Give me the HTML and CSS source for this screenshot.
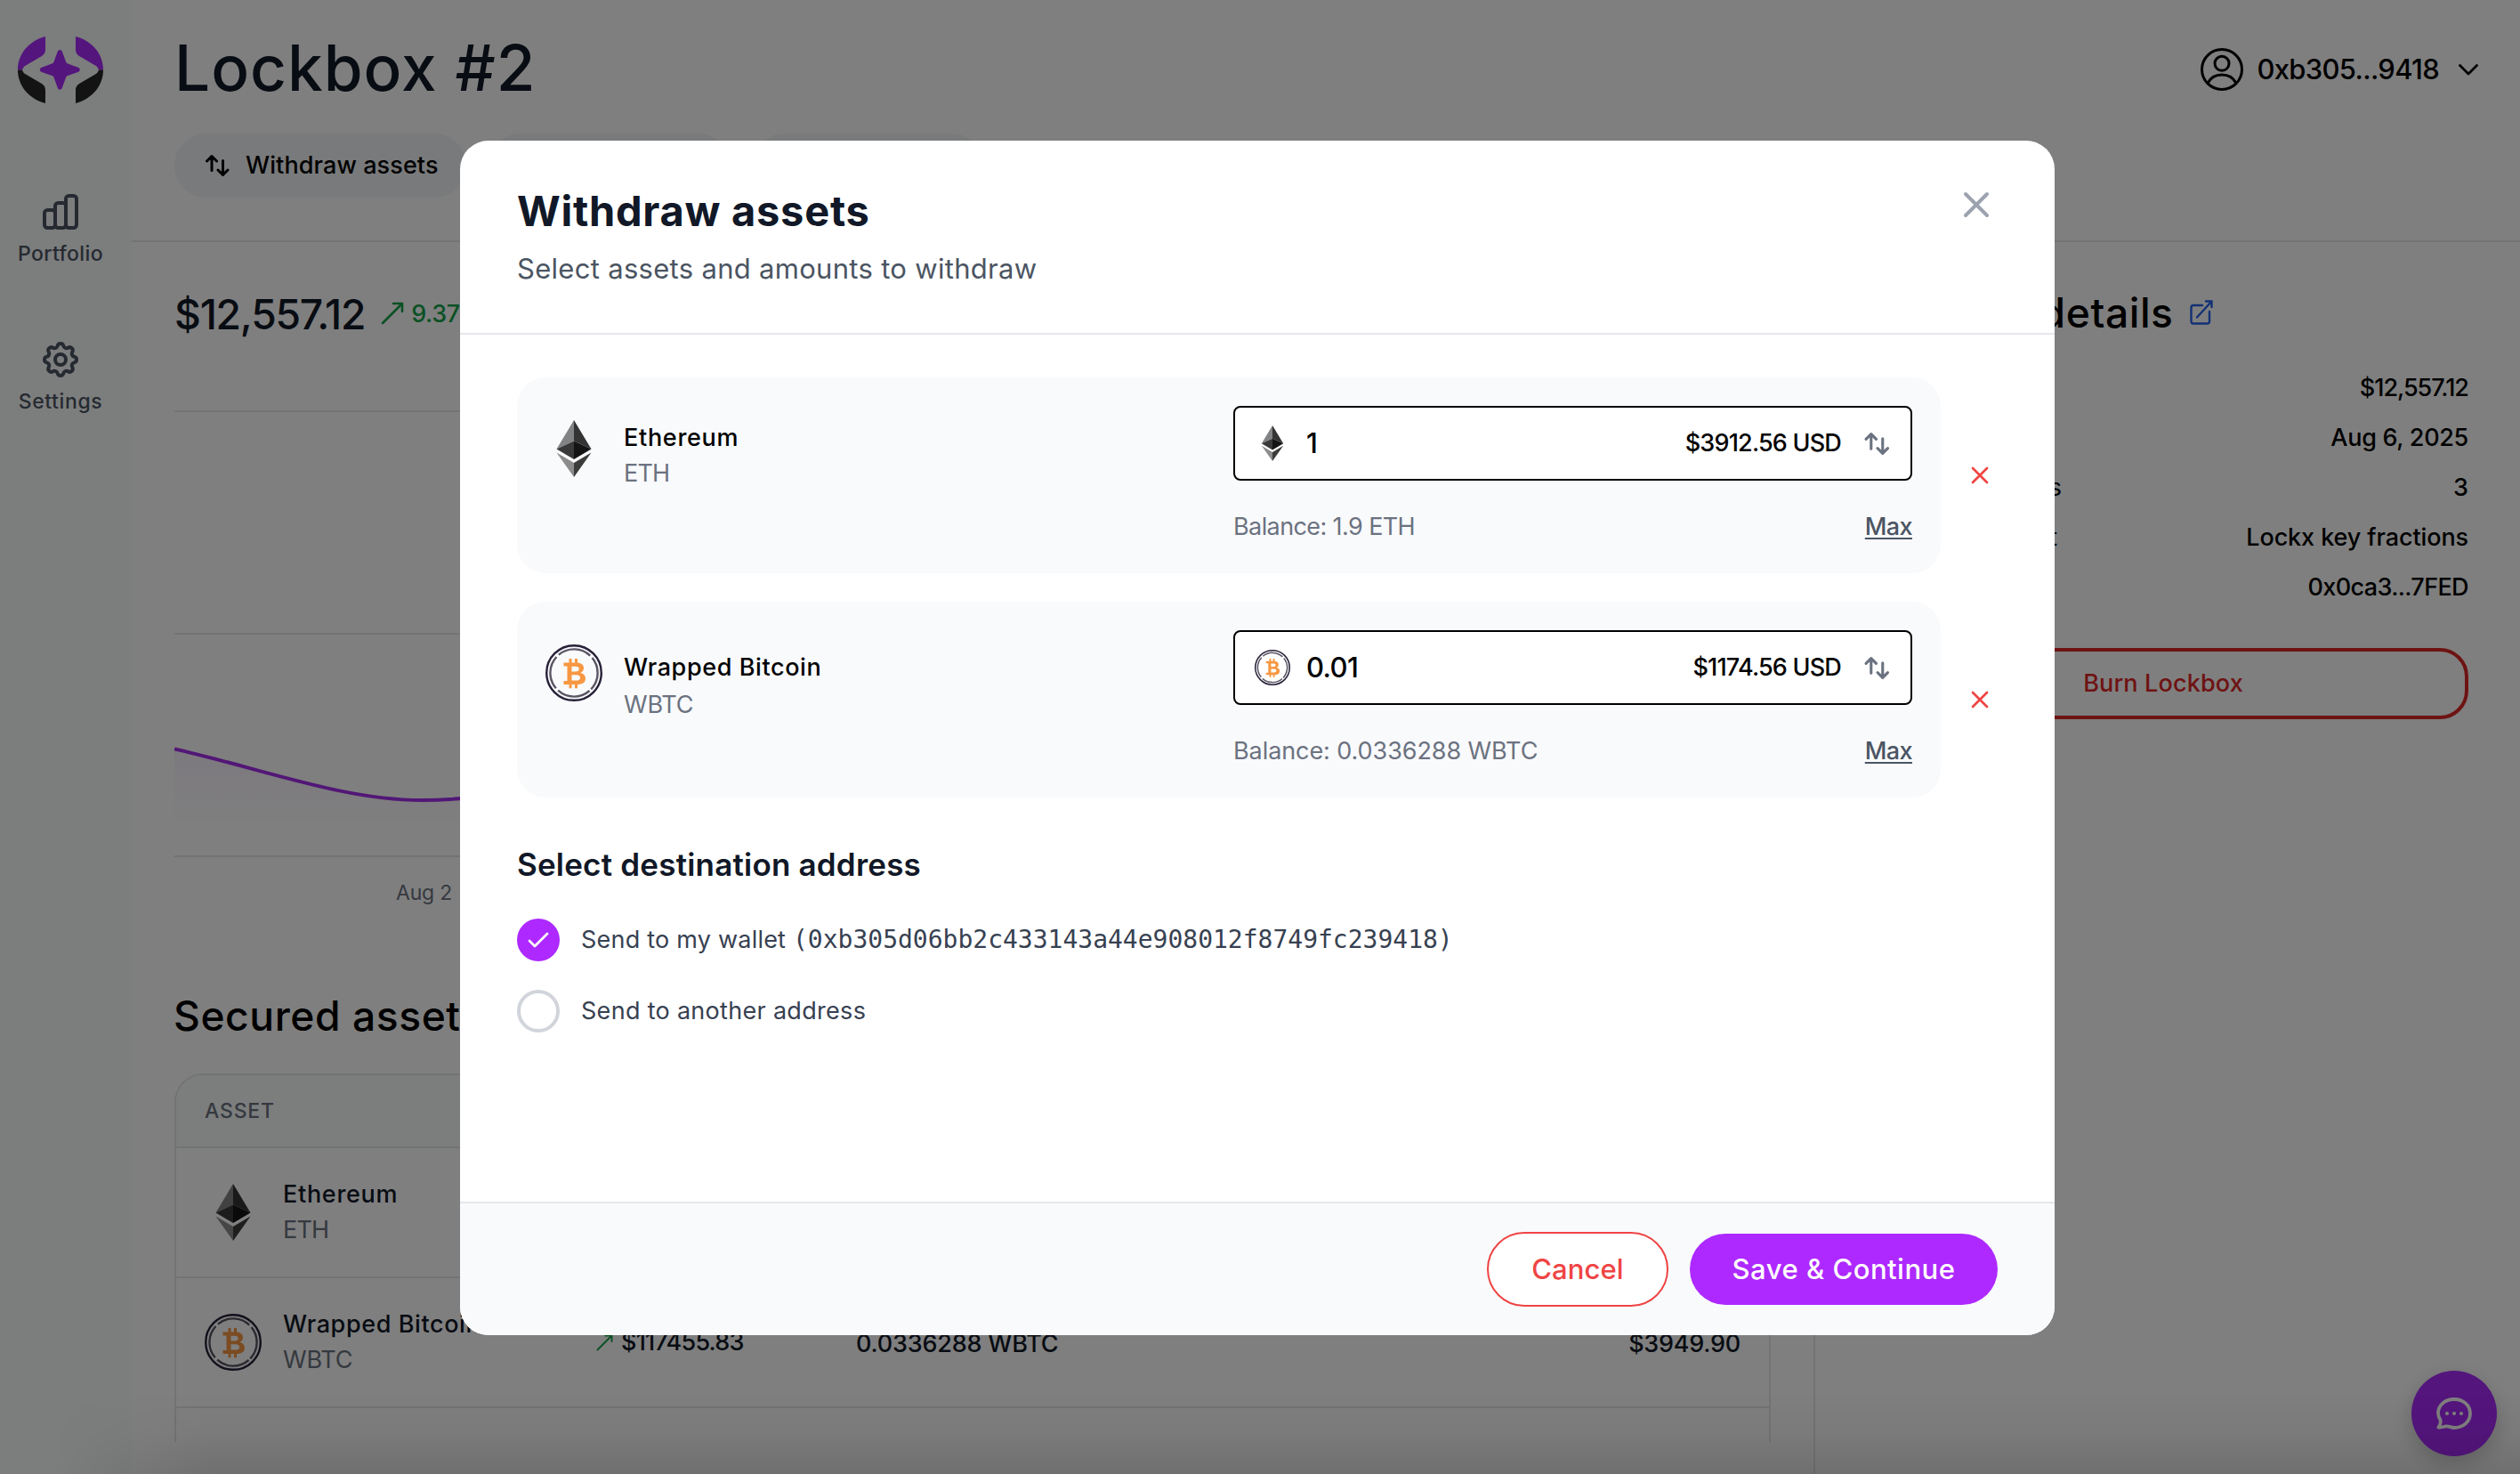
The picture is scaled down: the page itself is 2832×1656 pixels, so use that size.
FILE: index.html
```html
<!DOCTYPE html>
<html lang="en">
<head>
<meta charset="utf-8">
<title>Lockbox #2</title>
<link rel="stylesheet" href="styles.css">
</head>
<body>
<svg class="defs" width="0" height="0" aria-hidden="true">
  <symbol id="eth" viewBox="0 0 64 64">
    <path fill="#828384" d="M32 0 12.5 32.5 32 23.5z"/>
    <path fill="#343434" d="M32 0 51.5 32.5 32 23.5z"/>
    <path fill="#393939" d="M12.5 32.5 32 23.5V44z"/>
    <path fill="#141414" d="M51.5 32.5 32 23.5V44z"/>
    <path fill="#8c8c8c" d="M12.5 36.5 32 48v16z"/>
    <path fill="#3c3c3b" d="M51.5 36.5 32 48v16z"/>
  </symbol>
  <symbol id="wbtc" viewBox="0 0 64 64">
    <circle cx="32" cy="32" r="30.8" fill="none" stroke="#282138" stroke-width="2.4"/>
    <circle cx="32" cy="32" r="26.6" fill="none" stroke="#5a5564" stroke-width="2.4" stroke-dasharray="38.3 3.48" transform="rotate(48.8 32 32)"/>
    <path fill="#f79742" fill-rule="evenodd" d="M20.5 20.5H35c5 0 8 2.4 8 6.1 0 2.6-1.400 4.500-3.700 5.300 3.600.8 5.700 3 5.700 6.300 0 4.500-3.500 6.800-9.500 6.800h-15v-4h4v-16.500h-4zM29.500 24.800v5.600h4.300c2.600 0 3.900-1 3.900-2.900s-1.300-2.700-3.900-2.700zM29.500 34.200v6.400h5c3 0 4.500-1.100 4.500-3.200s-1.500-3.200-4.500-3.200z"/>
    <path fill="#f79742" d="M26.500 16h3v5h-3zM33 16h3v5h-3zM26.500 44.500h3v4.700h-3zM33 44.500h3v4.700h-3z"/>
  </symbol>
  <symbol id="swap" viewBox="0 0 28 26">
    <path fill="none" stroke="currentColor" stroke-width="3" stroke-linecap="round" stroke-linejoin="round" d="M8 18.500V2.500M2.500 8 8 2.500l5.500 5.500M20.500 7.500v16M15 18l5.500 5.500L26 18"/>
  </symbol>
  <symbol id="cross" viewBox="0 0 48 48">
    <path fill="none" stroke="currentColor" stroke-width="4" stroke-linecap="round" d="m12 12 24 24M36 12 12 36"/>
  </symbol>
  <symbol id="trend" viewBox="0 0 26 26">
    <path fill="none" stroke="currentColor" stroke-width="2.600" stroke-linecap="round" stroke-linejoin="round" d="M2 24 24 2M14 2h10v9"/>
  </symbol>
</svg>

<div class="app">
  <nav class="sidebar">
    <svg class="logo" viewBox="0 0 96 75">
      <path fill="#a82afa" d="M31 0v14c0 4-1 6-4.500 8.200L9 32.500C6.500 34 6 35 5 37.500H0C0 20 12 5 31 0z"/>
      <path fill="#262626" d="M31 75V61c0-4-1-6-4.500-8.200L9 42.500C6.500 41 6 40 5 37.500H0C0 55 12 70 31 75z"/>
      <path fill="#a82afa" d="M65 0v14c0 4 1 6 4.500 8.200L87 32.500c2.500 1.500 3 2.500 4 5h5C96 20 84 5 65 0z"/>
      <path fill="#262626" d="M65 75V61c0-4 1-6 4.500-8.200L87 42.500c2.500-1.500 3-2.500 4-5h5C96 55 84 70 65 75z"/>
      <path fill="#a82afa" d="M44.700 17c.9-2.700 4.300-2.700 5.200 0l4.100 11.300c.4 1.200 1 1.800 2.200 2.200L67.600 34.700c2.900 1 2.900 4.200 0 5.200l-11.400 4.200c-1.200.4-1.800 1-2.200 2.200L49.900 57.600c-.9 2.700-4.300 2.700-5.200 0l-4.100-11.300c-.4-1.200-1-1.800-2.200-2.200L27 39.900c-2.900-1-2.900-4.200 0-5.200l11.400-4.200c1.200-.4 1.800-1 2.200-2.200z"/>
    </svg>
    <a class="nav-item">
      <svg viewBox="2 2 20 20" fill="none" stroke="currentColor" stroke-width="2"><rect x="3" y="11" width="6" height="10" rx="1.700"/><rect x="9" y="7" width="6" height="14" rx="1.700"/><rect x="15" y="3" width="6" height="18" rx="1.700"/></svg>
      <span class="t-portfolio">Portfolio</span>
    </a>
    <a class="nav-item">
      <svg viewBox="2 2 20 20" fill="none" stroke="currentColor" stroke-width="2" stroke-linejoin="round"><path d="M10.325 4.317c.426-1.756 2.924-1.756 3.350 0a1.724 1.724 0 0 0 2.573 1.066c1.543-.94 3.310.826 2.370 2.370a1.724 1.724 0 0 0 1.065 2.572c1.756.426 1.756 2.924 0 3.350a1.724 1.724 0 0 0-1.066 2.573c.94 1.543-.826 3.310-2.370 2.370a1.724 1.724 0 0 0-2.572 1.065c-.426 1.756-2.924 1.756-3.350 0a1.724 1.724 0 0 0-2.573-1.066c-1.543.94-3.310-.826-2.370-2.370a1.724 1.724 0 0 0-1.065-2.572c-1.756-.426-1.756-2.924 0-3.350a1.724 1.724 0 0 0 1.066-2.573c-.94-1.543.826-3.310 2.370-2.370.996.608 2.296.07 2.572-1.065z"/><circle cx="12" cy="12" r="3"/></svg>
      <span class="t-settings">Settings</span>
    </a>
  </nav>

  <div class="page">
    <header class="header">
      <div>
        <h1>Lockbox #2</h1>
        <div class="pills">
          <button class="pill"><svg><use href="#swap"/></svg>Withdraw assets</button>
          <span class="pill pill-b"></span>
          <span class="pill pill-c"></span>
        </div>
      </div>
      <div class="user">
        <svg class="avatar" viewBox="0 0 48 48" fill="none" stroke="currentColor" stroke-width="3"><circle cx="24" cy="24" r="22.500"/><circle cx="24" cy="17.300" r="8"/><path d="M8 39.500c3.500-7 9-9.500 16-9.500s12.500 2.500 16 9.500"/></svg>
        <span>0xb305...9418</span>
        <svg class="chev" viewBox="0 0 22 13" fill="none" stroke="currentColor" stroke-width="2.800" stroke-linecap="round" stroke-linejoin="round"><path d="m1.500 1.500 9.500 9.500 9.500-9.500"/></svg>
      </div>
    </header>

    <div class="columns">
      <main class="main">
        <div class="total"><strong>$12,557.12</strong><svg><use href="#trend"/></svg><span>9.37%</span></div>
        <svg class="chart" viewBox="0 0 1794 504">
          <defs><linearGradient id="fade" x1="0" y1="0" x2="0" y2="1"><stop offset="0" stop-color="#ad29ff" stop-opacity=".06"/><stop offset="1" stop-color="#ad29ff" stop-opacity="0"/></linearGradient></defs>
          <path stroke="#e5e7eb" stroke-width="2" d="M0 2h1794M0 252h1794M0 502h1794"/>
          <path fill="url(#fade)" d="M0 381.500C100 404 190 439 278 439c40 0 90-6 142-15v47H0z"/>
          <path fill="none" stroke="#a42fec" stroke-width="4" d="M0 381.500C100 404 190 439 278 439c40 0 90-6 142-15"/>
        </svg>
        <div class="axis">Aug 2</div>
        <h2>Secured assets</h2>
        <div class="table">
          <div class="thead">ASSET</div>
          <div class="row">
            <div class="asset"><svg><use href="#eth"/></svg><div><b class="t-eth">Ethereum</b><span class="t-ethsym">ETH</span></div></div>
          </div>
          <div class="row">
            <div class="asset"><svg><use href="#wbtc"/></svg><div><b class="t-wb">Wrapped Bitcoin</b><span>WBTC</span></div></div>
            <div class="price"><svg><use href="#trend"/></svg>$117455.83</div>
            <div class="amount">0.0336288 WBTC</div>
            <div class="value">$3949.90</div>
          </div>
        </div>
      </main>

      <aside class="details">
        <h2>Lockbox details <svg viewBox="0 0 26 28" fill="none" stroke="#2563eb" stroke-width="2.400" stroke-linecap="round" stroke-linejoin="round"><path d="M14 6H4a2.500 2.500 0 0 0-2.500 2.500V24A2.500 2.500 0 0 0 4 26.500h15.500A2.500 2.500 0 0 0 22 24V13M8 19.500 24.500 1.500M18 1.500h6.500V8"/></svg></h2>
        <dl>
          <div><dt></dt><dd class="d-total">$12,557.12</dd></div>
          <div><dt></dt><dd class="d-date">Aug 6, 2025</dd></div>
          <div><dt class="l-assets">Number of assets</dt><dd>3</dd></div>
          <div><dt class="l-contract">Token contract</dt><dd class="d-frac">Lockx key fractions</dd></div>
          <div><dt></dt><dd class="d-addr">0x0ca3...7FED</dd></div>
        </dl>
        <button class="burn">Burn Lockbox</button>
      </aside>
    </div>
  </div>

  <div class="chat"><svg viewBox="0 0 40 36" fill="none" stroke="#fff" stroke-width="3.800" stroke-linejoin="round"><path d="M2.300 33.700C4.800 30 5.500 27.500 4.300 24.800 2.800 22.300 2 20 2 17.500 2 9 9.500 2 20 2s18 7 18 16-7.500 16-18 16c-3.500 0-5.500-2-9-1.700-3.200.3-5 1.700-8.700 1.400z"/><g fill="#fff" stroke="none"><circle cx="12" cy="18" r="2.100"/><circle cx="20" cy="18" r="2.100"/><circle cx="28" cy="18" r="2.100"/></g></svg></div>
</div>

<div class="overlay">
  <section class="modal">
    <header class="m-head">
      <div>
        <h3>Withdraw assets</h3>
        <p>Select assets and amounts to withdraw</p>
      </div>
      <svg class="close"><use href="#cross"/></svg>
    </header>

    <div class="m-body">
      <div class="line">
        <div class="card">
          <div class="token"><svg><use href="#eth"/></svg><div><b class="t-eth">Ethereum</b><span class="t-ethsym">ETH</span></div></div>
          <div class="entry">
            <div class="input"><svg class="coin"><use href="#eth"/></svg><span class="num">1</span><span class="usd">$3912.56 USD</span><svg class="swap"><use href="#swap"/></svg></div>
            <div class="balance"><span class="bal-eth">Balance: 1.9 ETH</span><a>Max</a></div>
          </div>
        </div>
        <svg class="remove"><use href="#cross"/></svg>
      </div>
      <div class="line">
        <div class="card">
          <div class="token token-wbtc"><svg><use href="#wbtc"/></svg><div><b class="t-wb">Wrapped Bitcoin</b><span>WBTC</span></div></div>
          <div class="entry">
            <div class="input"><svg class="coin"><use href="#wbtc"/></svg><span class="num">0.01</span><span class="usd">$1174.56 USD</span><svg class="swap"><use href="#swap"/></svg></div>
            <div class="balance"><span>Balance: 0.0336288 WBTC</span><a>Max</a></div>
          </div>
        </div>
        <svg class="remove"><use href="#cross"/></svg>
      </div>

      <h4>Select destination address</h4>
      <label class="option"><span class="radio on"><svg viewBox="0 0 24 18" fill="none" stroke="#fff" stroke-width="2.800" stroke-linecap="round" stroke-linejoin="round"><path d="m2 10 6 6L22 2"/></svg></span><span>Send to my wallet <code>(0xb305d06bb2c433143a44e908012f8749fc239418)</code></span></label>
      <label class="option"><span class="radio"></span><span>Send to another address</span></label>
    </div>

    <footer class="m-foot">
      <button class="cancel">Cancel</button>
      <button class="save">Save &amp; Continue</button>
    </footer>
  </section>
</div>
<div class="edge"></div>
</body>
</html>
```
FILE: styles.css
```css
* { box-sizing: border-box; margin: 0; padding: 0; }
body {
  width: 2832px; height: 1656px; overflow: hidden; position: relative;
  background: #fff; color: #000;
  font: 400 27px/40px Inter, "Liberation Sans", sans-serif;
}
svg { display: block; flex: none; }
.defs { position: absolute; }
button { font: inherit; border: 0; background: none; }
b { font-weight: 500; }

.app { display: grid; grid-template-columns: 148px 1fr; height: 1656px; overflow: hidden; }

/* sidebar */
.sidebar { background: #f9fbfa; padding: 41px 12px 0 0; display: flex; flex-direction: column; align-items: center; color: #4b5563; }
.logo { width: 96px; height: 75px; margin-bottom: 102px; }
.nav-item { display: flex; flex-direction: column; align-items: center; gap: 11px; height: 166px; font-size: 23px; line-height: 32px; font-weight: 500; }
.nav-item svg { width: 40px; height: 40px; }
.t-portfolio { letter-spacing: .37px; }
.t-settings { letter-spacing: .6px; }

/* page header */
.page { display: flex; flex-direction: column; min-width: 0; }
.header { height: 272px; flex: none; border-bottom: 2px solid #e5e7eb; padding: 36px 46px 0 48px; display: flex; justify-content: space-between; align-items: flex-start; }
h1 { font-size: 71px; line-height: 80px; font-weight: 500; letter-spacing: 1px; color: #111827; }
.pills { display: flex; gap: 24px; margin-top: 34px; }
.pill { height: 72px; width: 328px; padding: 0 34px; border-radius: 36px; background: #f3f4f6; display: flex; align-items: center; gap: 18px; font-weight: 500; letter-spacing: .1px; white-space: nowrap; color: #000; }
.pill svg { width: 28px; height: 26px; }
.pill-b { width: 273px; }
.pill-c { width: 261px; }
.user { display: flex; align-items: center; margin-top: 18px; font-size: 31px; font-weight: 500; letter-spacing: -.7px; }
.avatar { width: 48px; height: 48px; margin-right: 15px; }
.chev { width: 22px; height: 13px; margin: 0 1px 0 22px; }

/* content */
.columns { flex: 1; display: grid; grid-template-columns: 1892px 1fr; min-height: 0; }
.main { padding: 53px 48px 0; border-right: 2px solid #e5e7eb; }
.total { display: flex; align-items: center; height: 56px; color: #16a34a; font-weight: 500; }
.total strong { font-size: 46.200px; font-weight: 500; letter-spacing: -1.200px; color: #111827; }
.total svg { width: 26px; height: 26px; margin: 0 8px 2px 18px; }
.total span { letter-spacing: -.4px; }
.chart { width: 1794px; height: 504px; margin-top: 79px; }
.axis { padding: 19px 0 1px 249px; font-size: 23px; letter-spacing: -.2px; color: #6b7280; }
h2 { font-size: 46.200px; line-height: 56px; font-weight: 500; letter-spacing: .57px; }
.main h2 { margin-top: 89px; margin-left: -1px; }
.table { margin-top: 37px; height: 414px; border: 2px solid #e5e7eb; border-bottom: 0; border-radius: 32px 32px 0 0; overflow: hidden; }
.thead { height: 82px; padding: 20px 32px; background: #f9fbfa; border-bottom: 2px solid #e5e7eb; font-size: 23px; font-weight: 500; letter-spacing: .8px; color: #6b7280; }
.row { height: 146px; border-bottom: 2px solid #e5e7eb; display: grid; grid-template-columns: 472px 292px 1fr auto; align-items: center; padding-right: 32px; font-weight: 500; color: #111827; }
.asset { display: flex; align-items: center; gap: 24px; padding-left: 32px; }
.asset svg, .token svg { width: 64px; height: 64px; }
.asset b, .asset span, .token b, .token span { display: block; }
.asset span, .token span { color: #6b7280; font-weight: 400; letter-spacing: -.2px; }
.t-eth { letter-spacing: .7px; }
.t-wb { letter-spacing: .6px; }
.asset .t-ethsym, .token .t-ethsym { letter-spacing: -.8px; }
.price { display: flex; align-items: center; gap: 9px; letter-spacing: -.79px; }
.price svg { width: 19px; height: 19px; color: #16a34a; }
.amount { letter-spacing: -.2px; padding-top: 3px; }
.value { letter-spacing: -.24px; padding-top: 3px; }

/* lockbox details */
.details { padding: 51px 58px 0 48px; }
.details h2 { display: flex; align-items: center; gap: 18px; }
.details h2 svg { width: 26px; height: 28px; }
dl { margin-top: 29px; font-weight: 500; }
dl div { display: flex; justify-content: space-between; align-items: center; height: 56px; }
dt { font-weight: 400; text-align: right; white-space: nowrap; }
.l-assets { width: 229px; }
.l-contract { width: 224px; }
.d-total { letter-spacing: -1px; }
.d-date { letter-spacing: -.3px; }
.d-frac { letter-spacing: -.1px; }
.d-addr { letter-spacing: -.62px; }
.burn { display: block; width: 100%; height: 80px; margin-top: 40px; border: 4px solid #dc2626; border-radius: 32px; color: #dc2626; font-weight: 500; letter-spacing: .15px; }

.chat { position: absolute; left: 2710px; top: 1540px; width: 96px; height: 96px; border-radius: 50%; background: #a82afa; display: grid; place-items: center; box-shadow: 0 8px 24px rgba(0,0,0,.2); }
.chat svg { width: 40px; height: 36px; }

/* withdraw dialog */
.overlay { position: absolute; inset: 0; background: rgba(0,0,0,.5); display: flex; justify-content: center; align-items: flex-start; padding: 158px 6px 0 0; }
.modal { width: 1792px; height: 1342px; border-radius: 32px; background: #fff; overflow: hidden; display: flex; flex-direction: column; }
.m-head { height: 218px; flex: none; border-bottom: 2px solid #e5e7eb; padding: 47px 64px 0; display: flex; justify-content: space-between; }
h3 { font-size: 47px; line-height: 64px; font-weight: 700; letter-spacing: .72px; color: #111827; }
.m-head p { margin-top: 9px; font-size: 31px; line-height: 48px; letter-spacing: .3px; color: #4b5563; }
.close { width: 48px; height: 48px; margin-top: 1px; color: #9ca3af; }
.m-body { flex: 1; padding: 48px 64px 0; }
.line { display: flex; align-items: center; gap: 24px; margin-bottom: 32px; }
.card { width: 1600px; height: 220px; padding: 32px; border-radius: 32px; background: #f9fafc; display: flex; justify-content: space-between; }
.token { display: flex; gap: 24px; padding-top: 16px; }
.token-wbtc > div { padding-top: 6px; }
.token-wbtc b { margin-bottom: 2px; }
.entry { width: 763px; }
.input { height: 84px; padding: 0 23px 0 22px; border: 2px solid #000; border-radius: 8px; background: #fff; display: flex; align-items: center; font-weight: 500; }
.coin { width: 40px; height: 40px; }
.num { flex: 1; margin-left: 18px; font-size: 31px; letter-spacing: -.6px; }
.usd { letter-spacing: -.8px; }
.swap { width: 30px; height: 27px; margin-left: 25px; color: #6b7280; }
.balance { display: flex; justify-content: space-between; margin-top: 32px; color: #6b7280; letter-spacing: -.08px; }
.bal-eth { letter-spacing: -.6px; }
.balance a { color: #4b5563; font-weight: 500; letter-spacing: -.6px; text-decoration: underline; text-decoration-thickness: 2px; text-underline-offset: 3px; }
.remove { width: 40px; height: 40px; padding: 4px; color: #ef4444; }
h4 { margin: 51px 0 37px; font-size: 35px; line-height: 48px; font-weight: 600; letter-spacing: .2px; color: #111827; }
.option { display: flex; align-items: center; gap: 24px; height: 48px; margin-bottom: 32px; letter-spacing: .22px; color: #374151; }
.option + .option { letter-spacing: .3px; }
.radio { width: 48px; height: 48px; border: 4px solid #d1d5db; border-radius: 50%; display: grid; place-items: center; }
.radio.on { border: 0; background: #ad29ff; }
.radio svg { width: 24px; height: 18px; }
code { font: 28px/40px "DejaVu Sans Mono", monospace; letter-spacing: 0; }
.m-foot { height: 150px; border-top: 2px solid #e5e7eb; background: #f9fafc; padding: 0 64px; display: flex; justify-content: flex-end; align-items: center; gap: 24px; font-size: 31px; font-weight: 500; }
.cancel { width: 204px; height: 84px; border: 2px solid #ef4444; border-radius: 42px; background: #fff; color: #ef4444; letter-spacing: .1px; }
.save { width: 346px; height: 80px; border-radius: 40px; background: #ad29ff; color: #fff; letter-spacing: .5px; }

/* soft darkening along the bottom of the window */
.edge { position: absolute; left: 0; right: 0; bottom: 0; height: 90px; background: linear-gradient(to top, rgba(0,0,0,.12), rgba(0,0,0,.035) 50%, transparent); -webkit-mask-image: linear-gradient(to right, transparent 60px, #000 240px); mask-image: linear-gradient(to right, transparent 60px, #000 240px); pointer-events: none; }
```
